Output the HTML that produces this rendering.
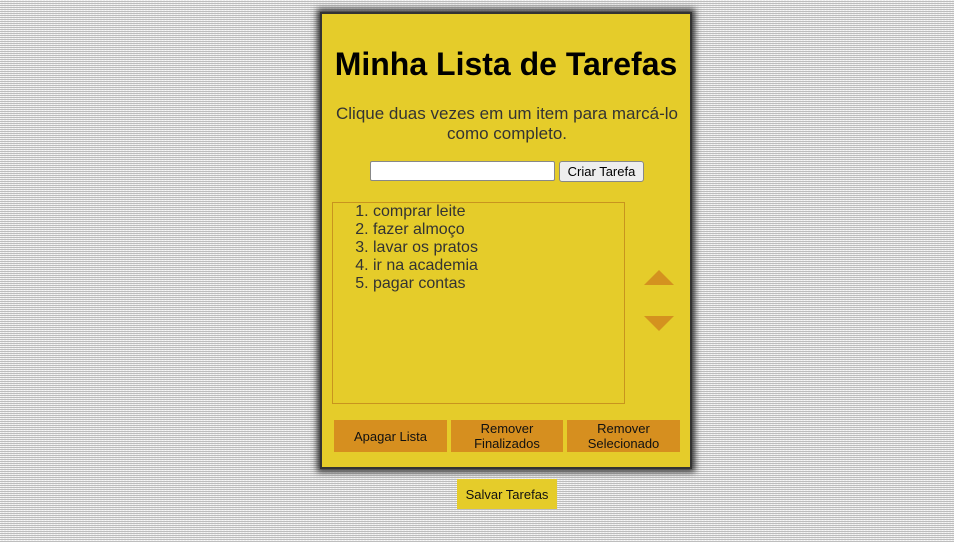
<!DOCTYPE html>
<html><head><style>
body{margin:0;width:954px;height:542px;overflow:hidden;font-family:"Liberation Sans",sans-serif;
background-color:#ededed;background-image:repeating-linear-gradient(0deg,#bdbdbd 0 1px,transparent 1px 2px),repeating-linear-gradient(90deg,rgba(255,255,255,.6) 0 1px,transparent 1px 3px);position:relative}
.panel{position:absolute;left:320px;top:12px;width:368px;height:453px;background:#e5cc2a;border:2px solid #333;box-shadow:0 0 6px 3px #333}
h1{position:absolute;left:0;width:100%;top:32px;margin:0;text-align:center;font-size:32px;font-weight:bold;color:#000}
.sub{position:absolute;left:10px;width:350px;top:90px;text-align:center;font-size:17px;line-height:20px;color:#333}
input{position:absolute;left:48px;top:147px;width:183px;height:18px;border:1px solid #888;border-radius:2px;padding:0;background:#fff}
.cb{position:absolute;left:237px;top:147px;width:83px;height:19px;border:1px solid #888;border-radius:3px;background:#eee;font-size:13px;line-height:19px;text-align:center;color:#000}
.list{position:absolute;left:10px;top:188px;width:291px;height:200px;border:1px solid #c8941e}
ol{margin:0;padding:0 0 0 40px;font-size:16px;line-height:18px;color:#333;margin-top:0}
.up{position:absolute;left:322px;top:256px;width:0;height:0;border-left:15px solid transparent;border-right:15px solid transparent;border-bottom:15px solid #d4921f}
.dn{position:absolute;left:322px;top:302px;width:0;height:0;border-left:15px solid transparent;border-right:15px solid transparent;border-top:15px solid #d4921f}
.b{position:absolute;top:406px;height:32px;background:#d68f1f;font-size:13px;line-height:15px;text-align:center;color:#111;display:flex;align-items:center;justify-content:center}
.save{position:absolute;left:457px;top:479px;width:100px;height:30px;background:#e5cc2a;font-size:13px;line-height:31px;text-align:center;color:#111}
</style></head><body>
<div class="panel">
<h1>Minha Lista de Tarefas</h1>
<div class="sub">Clique duas vezes em um item para marcá-lo como completo.</div>
<input type="text">
<div class="cb">Criar Tarefa</div>
<div class="list"><ol><li>comprar leite</li><li>fazer almoço</li><li>lavar os pratos</li><li>ir na academia</li><li>pagar contas</li></ol></div>
<div class="up"></div><div class="dn"></div>
<div class="b" style="left:12px;width:113px">Apagar Lista</div>
<div class="b" style="left:129px;width:112px">Remover<br>Finalizados</div>
<div class="b" style="left:245px;width:113px">Remover<br>Selecionado</div>
</div>
<div class="save">Salvar Tarefas</div>
</body></html>
